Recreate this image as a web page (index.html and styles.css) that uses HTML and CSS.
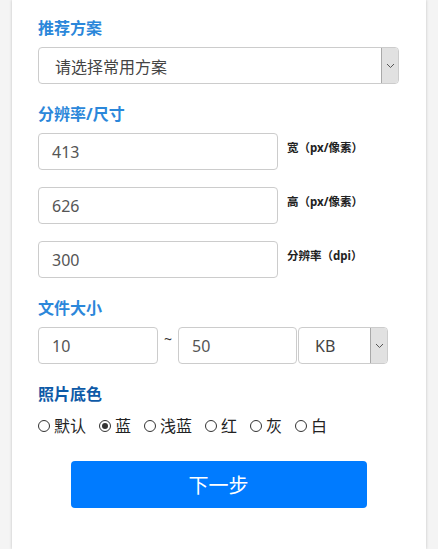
FILE: index.html
```html
<!DOCTYPE html>
<html lang="zh">
<head>
<meta charset="utf-8">
<title>照片尺寸</title>
<link rel="stylesheet" href="styles.css">
</head>
<body>
<div class="card">
  <div class="label">推荐方案</div>
  <div class="select wide">
    <span class="select-text">请选择常用方案</span>
    <span class="arrow"><svg width="9" height="6" viewBox="0 0 9 6"><path d="M1 1 L4.5 4.5 L8 1" fill="none" stroke="#555" stroke-width="1"/></svg></span>
  </div>

  <div class="label gap-top">分辨率/尺寸</div>
  <div class="field-row">
    <div class="input w240">413</div>
    <div class="hint">宽（px/像素）</div>
  </div>
  <div class="field-row next">
    <div class="input w240">626</div>
    <div class="hint">高（px/像素）</div>
  </div>
  <div class="field-row next">
    <div class="input w240">300</div>
    <div class="hint">分辨率（dpi）</div>
  </div>

  <div class="label gap-top">文件大小</div>
  <div class="size-row">
    <div class="input w120">10</div>
    <span class="tilde">~</span>
    <div class="input w119">50</div>
    <div class="select unit">
      <span class="select-text unit-text">KB</span>
      <span class="arrow"><svg width="9" height="6" viewBox="0 0 9 6"><path d="M1 1 L4.5 4.5 L8 1" fill="none" stroke="#555" stroke-width="1"/></svg></span>
    </div>
  </div>

  <div class="label dark gap-top">照片底色</div>
  <div class="radios">
    <span class="radio"><span class="dot"></span>默认</span>
    <span class="radio"><span class="dot checked"></span>蓝</span>
    <span class="radio"><span class="dot"></span>浅蓝</span>
    <span class="radio"><span class="dot"></span>红</span>
    <span class="radio"><span class="dot"></span>灰</span>
    <span class="radio"><span class="dot"></span>白</span>
  </div>

  <div class="btn-wrap">
    <button class="btn">下一步</button>
  </div>
</div>
</body>
</html>
```

FILE: styles.css
```css
html, body {
  margin: 0;
  padding: 0;
  background: #f4f4f4;
  font-family: "Noto Sans", "Noto Sans CJK SC", sans-serif;
  color: #333;
}
.card {
  margin: 0 12px;
  min-height: 549px;
  box-sizing: border-box;
  background: #fff;
  box-shadow: 0 0 3px rgba(0,0,0,0.2);
  padding: 16px 27px 0 26px;
}
.label {
  font-size: 16px;
  line-height: 24px;
  font-weight: bold;
  color: #2b87da;
  margin-bottom: 7px;
}
.label.dark { color: #0e5aa7; margin-bottom: 8px; }
.gap-top { margin-top: 18px; }
.select {
  display: flex;
  height: 37px;
  box-sizing: border-box;
  border: 1px solid #ccc;
  border-radius: 4px;
  align-items: stretch;
}
.select.wide { width: 361px; }
.select-text {
  flex: 1;
  display: flex;
  align-items: center;
  padding-left: 16px;
  font-size: 16px;
  color: #444;
}
.arrow {
  width: 16px;
  background: #e1e1e1;
  border-left: 1px solid #a9a9a9;
  border-radius: 0 3px 3px 0;
  display: flex;
  align-items: center;
  justify-content: center;
}
.field-row {
  display: flex;
  align-items: flex-start;
}
.field-row.next { margin-top: 17px; }
.input {
  height: 37px;
  box-sizing: border-box;
  border: 1px solid #ccc;
  border-radius: 4px;
  padding-left: 13px;
  display: flex;
  align-items: center;
  font-size: 16px;
  color: #555;
}
.w240 { width: 240px; }
.w120 { width: 120px; }
.w119 { width: 119px; }
.hint {
  margin-left: 9px;
  margin-top: 7px;
  font-size: 11.5px;
  line-height: 16px;
  font-weight: bold;
  color: #222;
}
.size-row {
  display: flex;
  align-items: flex-start;
}
.tilde {
  width: 20px;
  text-align: center;
  font-size: 14px;
  line-height: 20px;
  margin-top: 2px;
  color: #333;
}
.select.unit { width: 90px; margin-left: 1px; }
.unit-text { padding-left: 16px; }
.radios {
  display: flex;
  gap: 13px;
  font-size: 16px;
  line-height: 24px;
  color: #222;
}
.radio {
  display: flex;
  align-items: center;
}
.dot {
  width: 12px;
  height: 12px;
  box-sizing: border-box;
  border: 1px solid #333;
  border-radius: 50%;
  margin-right: 4px;
  position: relative;
}
.dot.checked::after {
  content: "";
  position: absolute;
  left: 2px;
  top: 2px;
  width: 6px;
  height: 6px;
  border-radius: 50%;
  background: #333;
}
.btn-wrap {
  display: flex;
  justify-content: center;
  margin-top: 23px;
}
.btn {
  width: 296px;
  height: 47px;
  border: none;
  border-radius: 4px;
  background: #007bff;
  color: #fff;
  font-family: "Noto Sans CJK SC", sans-serif;
  font-size: 20px;
}
```
